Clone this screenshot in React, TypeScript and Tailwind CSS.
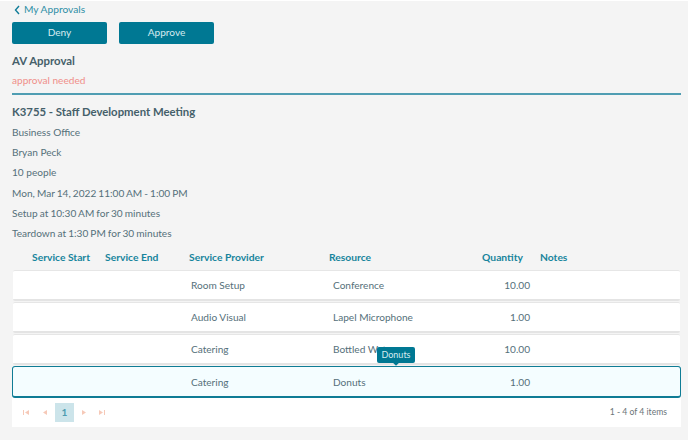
import React from "react";

const rows = [
  { p: "Room Setup", r: "Conference", q: "10.00" },
  { p: "Audio Visual", r: "Lapel Microphone", q: "1.00" },
  { p: "Catering", r: "Bottled Water", q: "10.00" },
];

function Cells({ p, r, q, lead }: { p: string; r: string; q: string; lead: string }) {
  return (
    <>
      <div className={`${lead} shrink-0`} />
      <div className="w-[142px] shrink-0">{p}</div>
      <div className="w-[142px] shrink-0">{r}</div>
      <div className="w-[55px] shrink-0 text-right">{q}</div>
    </>
  );
}

function Pager({ d }: { d: string }) {
  return (
    <svg width="7" height="7" viewBox="0 0 7 7" className="text-[#f6c9b8]">
      <path d={d} fill="currentColor" />
    </svg>
  );
}

export default function App() {
  return (
    <div className="relative h-[440px] w-[688px] overflow-hidden bg-[#f4f4f4] font-['Lato',sans-serif] text-[10.1px] text-[#55707a]">
      <div className="h-px bg-white" />
      <div className="flex h-[18px] items-center pl-[14px] text-[10.2px] text-[#2f8fa6]">
        <svg width="7" height="10" viewBox="0 0 7 10" fill="none" className="mr-[3px]">
          <path d="M5 1 1.5 5 5 9" stroke="#0f7c98" strokeWidth="1.4" />
        </svg>
        <span>My Approvals</span>
      </div>
      <div className="ml-[12px] flex gap-[12px] pt-[3px]">
        <div className="flex h-[22px] w-[95px] items-center justify-center rounded-[2px] bg-[#007893] text-[#d6ebf0]">Deny</div>
        <div className="flex h-[22px] w-[95px] items-center justify-center rounded-[2px] bg-[#007893] text-[#d6ebf0]">Approve</div>
      </div>
      <div className="mt-[8px] ml-[12px] h-[18px] text-[11.4px] leading-[18px] font-bold text-[#45606a]">AV Approval</div>
      <div className="mt-[2px] ml-[12px] h-[16px] leading-[16px] text-[#f08f8a]">approval needed</div>
      <div className="mt-[5px] ml-[12px] h-[2px] w-[669px] bg-[#4f9db2]" />
      <div className="mt-[8px] ml-[12px] h-[18px] text-[11.35px] leading-[18px] font-bold text-[#45606a]">K3755 - Staff Development Meeting</div>
      <div className="mt-px ml-[12px] flex flex-col leading-[20.2px]">
        <div>Business Office</div>
        <div>Bryan Peck</div>
        <div>10 people</div>
        <div className="[word-spacing:-0.5px]">Mon, Mar 14, 2022 11:00 AM - 1:00 PM</div>
        <div className="[word-spacing:-0.5px]">Setup at 10:30 AM for 30 minutes</div>
        <div className="[word-spacing:-0.5px]">Teardown at 1:30 PM for 30 minutes</div>
      </div>
      <div className="mt-[4px] mb-[3px] ml-[12px] flex h-[20px] w-[669px] items-center text-[10.3px] font-bold text-[#17849c]">
        <div className="w-[93px] shrink-0 pl-[20px]">Service Start</div>
        <div className="w-[84px] shrink-0">Service End</div>
        <div className="w-[140px] shrink-0">Service Provider</div>
        <div className="w-[142px] shrink-0">Resource</div>
        <div className="w-[52px] shrink-0 text-right">Quantity</div>
        <div className="ml-[17px]">Notes</div>
      </div>
      <div className="ml-[13px] w-[667px]">
        {rows.map((x) => (
          <div
            key={x.p + x.r}
            className="mb-px box-content flex h-[27px] items-center rounded-[2px] border-t border-b-2 border-t-[#e6e6e6] border-b-[#e4e4e4] bg-white pt-px"
          >
            <Cells p={x.p} r={x.r} q={x.q} lead="w-[178px]" />
          </div>
        ))}
      </div>
      <div className="ml-[12px] w-[669px] bg-white">
        <div className="flex h-[32px] items-center rounded-[3px] border border-b-2 border-[#0f7c95] bg-[#f4fdff] pt-px">
          <Cells p="Catering" r="Donuts" q="1.00" lead="w-[178px]" />
        </div>
        <div className="flex h-[29px] items-center justify-between pr-[14px] pl-[4px]">
          <div className="flex items-center">
            <div className="flex w-[20px] justify-center"><Pager d="M0 1h1v5H0zM6 1v5L2 3.5z" /></div>
            <div className="flex w-[19px] justify-center"><Pager d="M5 1v5L1 3.5z" /></div>
            <div className="flex h-[19px] w-[19px] items-center justify-center bg-[#cce4ea] font-bold text-[#4c9bb0]">1</div>
            <div className="flex w-[19px] justify-center"><Pager d="M2 1v5l4-2.5z" /></div>
            <div className="flex w-[19px] justify-center"><Pager d="M0 1v5l4-2.5zM5 1h1v5H5z" /></div>
          </div>
          <div className="text-[8.6px] text-[#6a7478]">1 - 4 of 4 items</div>
        </div>
      </div>
      <div className="absolute top-[347px] left-[377px] flex h-[16px] w-[38px] items-center justify-center rounded-[2px] bg-[#007893] text-[9px] text-[#d6ebf0]">
        Donuts
        <div className="absolute top-[14px] left-[17px] h-[4px] w-[4px] rotate-45 bg-[#007893]" />
      </div>
    </div>
  );
}
